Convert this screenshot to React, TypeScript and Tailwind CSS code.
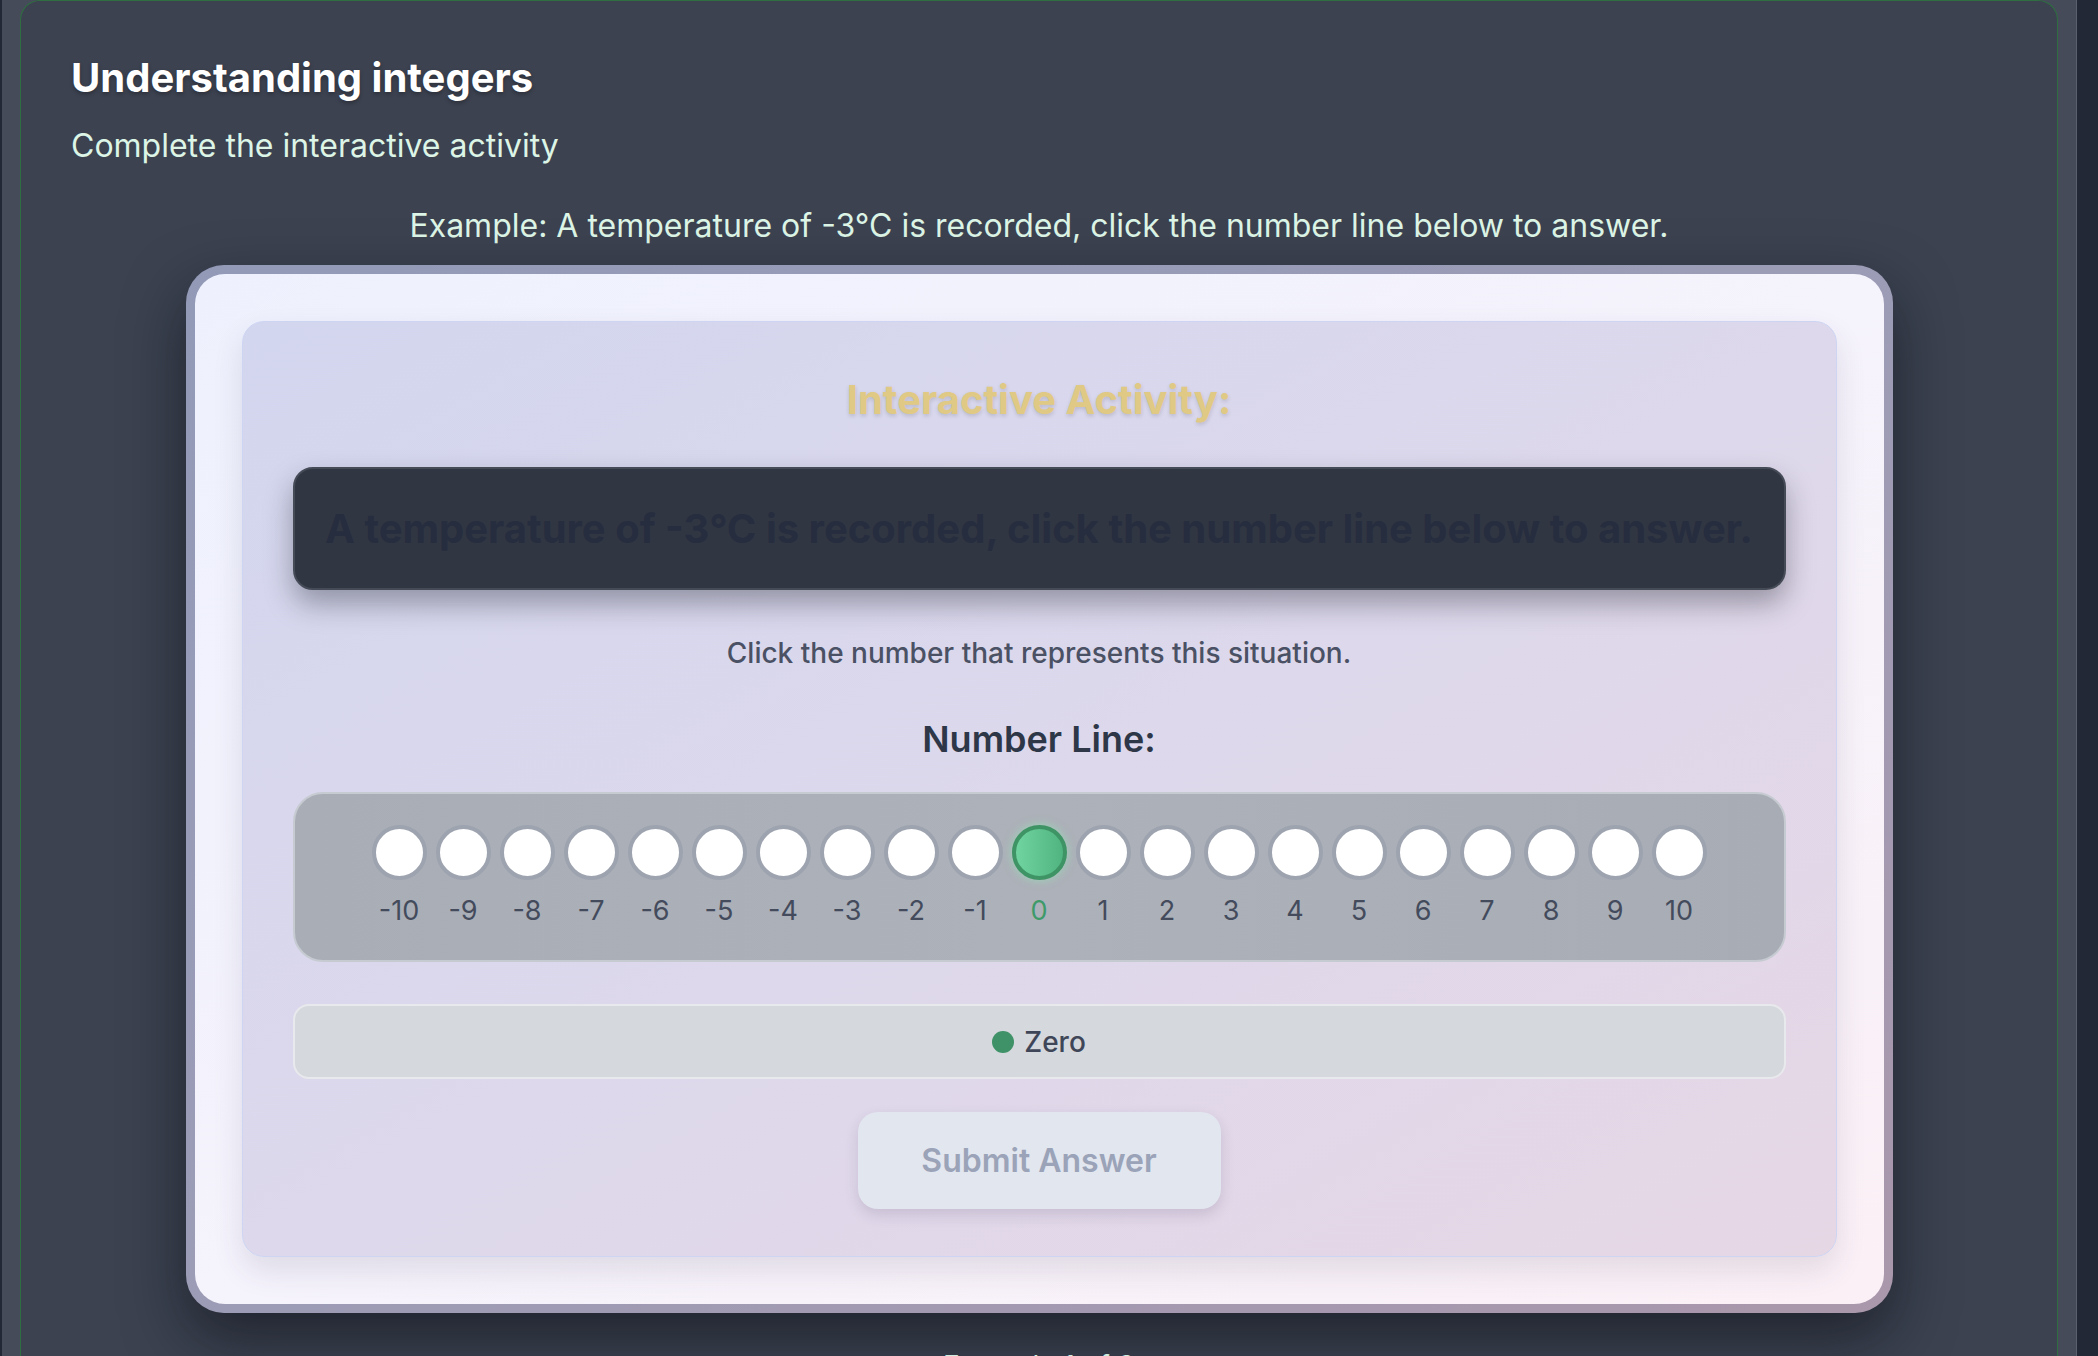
import React from "react";

const nums = Array.from({ length: 21 }, (_, i) => i - 10);

export default function App() {
  return (
    <div
      className="flex h-[1356px] w-[2098px] overflow-hidden bg-[#222835]"
      style={{ fontFamily: 'Inter, "Noto Sans", sans-serif' }}
    >
      <div className="ml-[2px] flex w-[2075px] border-r border-[#596070] bg-[#454b59] pl-[18px] pr-[18px]">
        <div className="flex w-full flex-col rounded-t-[20px] border border-b-0 border-[#2f6e40] bg-[#3c4250] px-[50px]">
          <h1 className="mt-[53px] text-[40px] font-bold leading-[48px] text-white [text-shadow:0_2px_4px_rgba(0,0,0,0.3)]">
            Understanding integers
          </h1>
          <p className="mt-[24px] text-[32px] leading-[40px] text-[#dcf5e6]">
            Complete the interactive activity
          </p>
          <p className="mt-[40px] text-center text-[32px] leading-[40px] text-[#dcf5e6]">
            Example: A temperature of -3°C is recorded, click the number line below to answer.
          </p>

          <div className="mx-auto mt-[19px] w-[1707px] rounded-[38px] bg-gradient-to-br from-[#929ab7] via-[#9c9cb6] to-[#aa97ab] p-[9px] shadow-[0_25px_60px_rgba(10,12,20,0.55)]">
            <div className="rounded-[30px] bg-gradient-to-br from-[#eef1fd] via-[#f5f3fc] to-[#fbf0f6] p-[47px]">
              <div className="flex flex-col items-center rounded-[22px] border border-[#cdd5f2] bg-gradient-to-br from-[#d2d6ee] via-[#ddd8ec] to-[#e6d7e5] px-[50px] pb-[47px] pt-[48px] shadow-[0_14px_30px_rgba(60,50,80,0.12)]">
                <h2 className="flex h-[60px] items-center text-[40px] font-bold text-[#e0c985] [text-shadow:0_2px_4px_rgba(0,0,0,0.15)]">
                  Interactive Activity:
                </h2>

                <div className="mt-[37px] flex h-[123px] w-full items-center justify-center rounded-[20px] border-2 border-[#464b58] bg-[#313643] shadow-[0_14px_28px_rgba(20,22,35,0.35)]">
                  <p className="text-[40px] font-bold text-[#262d3e]">
                    A temperature of -3°C is recorded, click the number line below to answer.
                  </p>
                </div>

                <p className="mt-[46px] flex h-[34px] items-center text-[28px] font-medium text-[#4a5164]">
                  Click the number that represents this situation.
                </p>

                <h3 className="mt-[47px] flex h-[44px] items-center text-[36px] font-semibold text-[#2d3748]">
                  Number Line:
                </h3>

                <div className="mt-[31px] flex h-[170px] w-full justify-center rounded-[30px] border-2 border-[#c6cad1] bg-gradient-to-r from-[#a9aeb6] via-[#adb1b9] to-[#a8adb5] pt-[31px]">
                  <div className="flex gap-[9px]">
                    {nums.map((n) => {
                      const sel = n === 0;
                      return (
                        <div key={n} className="flex w-[55px] flex-col items-center">
                          {sel ? (
                            <div className="h-[55px] w-[55px] rounded-full border-[4px] border-[#3e9465] bg-gradient-to-r from-[#70d4a1] to-[#50b480] shadow-[0_0_10px_rgba(140,240,180,0.6)]" />
                          ) : (
                            <div className="h-[55px] w-[55px] rounded-full border-[4px] border-[#9da3af] bg-white" />
                          )}
                          <span
                            className={
                              sel
                                ? "mt-[15px] text-[27px] leading-[32px] text-[#3f9a6a]"
                                : "mt-[15px] text-[27px] leading-[32px] text-[#434b5c]"
                            }
                          >
                            {n}
                          </span>
                        </div>
                      );
                    })}
                  </div>
                </div>

                <div className="mt-[42px] flex h-[75px] w-full items-center justify-center gap-[10px] rounded-[16px] border-2 border-[#e8e9ec] bg-[#d5d8dc]">
                  <span className="h-[22px] w-[22px] rounded-full bg-[#3f9268]" />
                  <span className="text-[28px] font-medium text-[#3f4658]">Zero</span>
                </div>

                <button className="mt-[33px] flex h-[97px] w-[363px] items-center justify-center rounded-[20px] bg-[#e2e6ef] text-[32px] font-semibold text-[#9aa3b8] shadow-[0_6px_14px_rgba(60,50,90,0.15)]">
                  Submit Answer
                </button>
              </div>
            </div>
          </div>

          <p className="mt-[33px] text-center text-[28px] leading-[40px] text-[#cfeee0]">
            Example 1 of 3
          </p>
        </div>
      </div>
    </div>
  );
}
